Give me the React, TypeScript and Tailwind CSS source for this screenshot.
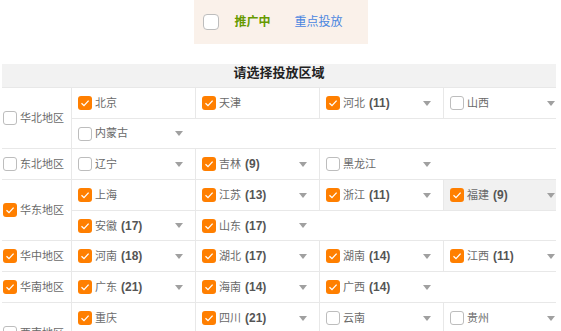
import React from "react";

type Prov = { n: string; c: boolean; count?: number; arrow?: boolean; hl?: boolean };
type Region = { name: string; c: boolean; rows: Prov[][] };

const regions: Region[] = [
  {
    name: "华北地区",
    c: false,
    rows: [
      [
        { n: "北京", c: true },
        { n: "天津", c: true },
        { n: "河北", c: true, count: 11, arrow: true },
        { n: "山西", c: false, arrow: true },
      ],
      [{ n: "内蒙古", c: false, arrow: true }],
    ],
  },
  {
    name: "东北地区",
    c: false,
    rows: [
      [
        { n: "辽宁", c: false, arrow: true },
        { n: "吉林", c: true, count: 9, arrow: true },
        { n: "黑龙江", c: false, arrow: true },
      ],
    ],
  },
  {
    name: "华东地区",
    c: true,
    rows: [
      [
        { n: "上海", c: true },
        { n: "江苏", c: true, count: 13, arrow: true },
        { n: "浙江", c: true, count: 11, arrow: true },
        { n: "福建", c: true, count: 9, arrow: true, hl: true },
      ],
      [
        { n: "安徽", c: true, count: 17, arrow: true },
        { n: "山东", c: true, count: 17, arrow: true },
      ],
    ],
  },
  {
    name: "华中地区",
    c: true,
    rows: [
      [
        { n: "河南", c: true, count: 18, arrow: true },
        { n: "湖北", c: true, count: 17, arrow: true },
        { n: "湖南", c: true, count: 14, arrow: true },
        { n: "江西", c: true, count: 11, arrow: true },
      ],
    ],
  },
  {
    name: "华南地区",
    c: true,
    rows: [
      [
        { n: "广东", c: true, count: 21, arrow: true },
        { n: "海南", c: true, count: 14, arrow: true },
        { n: "广西", c: true, count: 14, arrow: true },
      ],
    ],
  },
  {
    name: "西南地区",
    c: false,
    rows: [
      [
        { n: "重庆", c: true },
        { n: "四川", c: true, count: 21, arrow: true },
        { n: "云南", c: false, arrow: true },
        { n: "贵州", c: false, arrow: true },
      ],
      [{ n: "西藏", c: false, arrow: true }],
    ],
  },
];

function Check({ on, big }: { on: boolean; big?: boolean }) {
  const size = big ? "size-[16px] rounded-[4px]" : "size-[14px] rounded-[3px]";
  if (!on)
    return <span className={`${size} shrink-0 border border-[#bdbdbd] bg-white`} />;
  return (
    <span className={`${size} flex shrink-0 items-center justify-center bg-[#ff7f00]`}>
      <svg viewBox="0 0 14 14" className="size-[14px]">
        <path d="M3.5 7.2 L6 9.6 L10.6 4.6" fill="none" stroke="#fff" strokeWidth="1.3" />
      </svg>
    </span>
  );
}

function Caret() {
  return (
    <svg viewBox="0 0 8 5" className="ml-auto mr-[12px] h-[5px] w-[8px] shrink-0">
      <path d="M0 0 H8 L4 5 Z" fill="#a0a0a0" />
    </svg>
  );
}

function Cell({ p }: { p: Prov }) {
  return (
    <div
      className={`flex h-full w-[124px] shrink-0 items-center border-l border-[#e8e8e8] pl-[6px] ${
        p.hl ? "bg-[#f1f1f1]" : ""
      }`}
    >
      <Check on={p.c} />
      <span className="ml-[3px] text-[11px] text-[#6a6a6a]">
        {p.n}
        {p.count !== undefined && (
          <b className="ml-[4px] text-[12px] font-bold text-[#555]">({p.count})</b>
        )}
      </span>
      {p.arrow && <Caret />}
    </div>
  );
}

export default function App() {
  return (
    <div className="h-[331px] overflow-hidden bg-white font-['Liberation_Sans','Noto_Sans_CJK_SC',sans-serif]">
      <div className="mx-auto flex h-[44px] w-[174px] items-center bg-[#faf1ea] pl-[9px] text-[12px]">
        <Check on={false} big />
        <span className="ml-[16px] font-bold text-[#669a00]">推广中</span>
        <span className="ml-[24px] text-[#4a86e0]">重点投放</span>
      </div>

      <div className="ml-[2px] mt-[20px] w-[554px] overflow-hidden">
        <div className="h-[24px] border-b border-[#e8e8e8] bg-[#f2f2f2] text-center text-[13px] font-bold leading-[17px] text-[#222]">
          请选择投放区域
        </div>
        {regions.map((r) => (
          <div key={r.name} className="flex border-b border-[#e8e8e8]">
            <div className="flex w-[69px] shrink-0 items-center pl-[1px]">
              <Check on={r.c} />
              <span className="ml-[3px] text-[11px] text-[#6a6a6a]">{r.name}</span>
            </div>
            <div className="flex flex-col">
              {r.rows.map((row, i) => (
                <div
                  key={i}
                  className={`flex h-[30px] ${i > 0 ? "border-t border-[#e8e8e8]" : ""}`}
                >
                  {row.map((p) => (
                    <Cell key={p.n} p={p} />
                  ))}
                </div>
              ))}
            </div>
          </div>
        ))}
      </div>
    </div>
  );
}
